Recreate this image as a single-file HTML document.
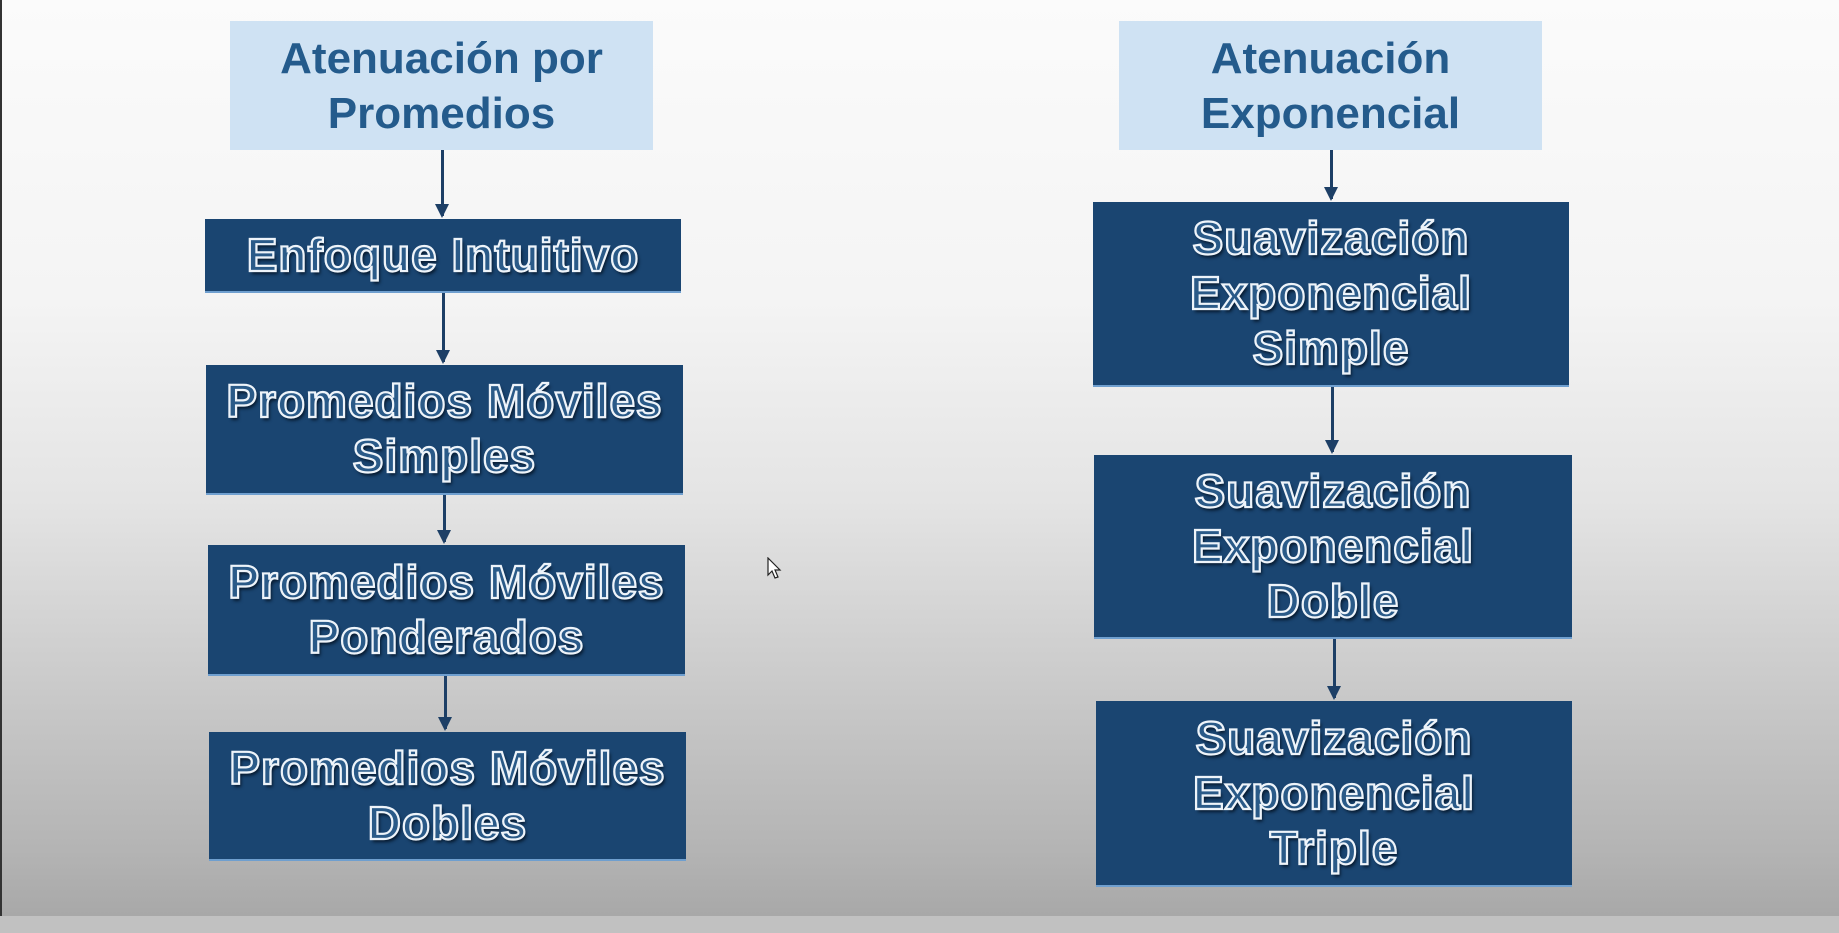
<!DOCTYPE html>
<html><head><meta charset="utf-8"><style>
html,body{margin:0;padding:0}
body{width:1839px;height:933px;position:relative;overflow:hidden;font-family:"Liberation Sans",sans-serif;
background:linear-gradient(to bottom,#fbfbfb 0px,#f4f4f4 300px,#e4e4e4 500px,#c8c8c8 700px,#b4b4b4 850px,#a8a8a8 916px);}
.bar{position:absolute;left:0;top:916px;width:1839px;height:17px;background:#c1c1c1}
.edge{position:absolute;left:0;top:0;width:2px;height:916px;background:#333}
.hdr{position:absolute;background:#cfe2f3;color:#245b8c;font-weight:bold;font-size:44px;line-height:55px;display:flex;align-items:center;justify-content:center;text-align:center}
.bx{position:absolute;background:#1a4571;border-bottom:2px solid #6f9fcf;display:flex;align-items:center;justify-content:center;text-align:center;
font-weight:bold;font-size:46px;line-height:55px;color:#2a5a88;-webkit-text-stroke:2.2px #eef4fa;text-shadow:2px 3px 3px #06182c;letter-spacing:1px;white-space:nowrap}
.ar{position:absolute;width:3px;background:#1d3f66}
.ar:after{content:"";position:absolute;bottom:-2px;left:-6px;border-left:7.5px solid transparent;border-right:7.5px solid transparent;border-top:14px solid #1d3f66}
</style></head><body>
<div class="edge"></div>
<div class="hdr" style="left:230px;top:21px;width:423px;height:129px">Atenuación por<br>Promedios</div>
<div class="ar" style="left:441px;top:150px;height:66px"></div>
<div class="bx" style="left:205px;top:219px;width:476px;height:72px">Enfoque Intuitivo</div>
<div class="ar" style="left:442px;top:293px;height:69px"></div>
<div class="bx" style="left:206px;top:365px;width:477px;height:128px">Promedios Móviles<br>Simples</div>
<div class="ar" style="left:443px;top:495px;height:47px"></div>
<div class="bx" style="left:208px;top:545px;width:477px;height:129px">Promedios Móviles<br>Ponderados</div>
<div class="ar" style="left:444px;top:676px;height:53px"></div>
<div class="bx" style="left:209px;top:732px;width:477px;height:127px">Promedios Móviles<br>Dobles</div>

<div class="hdr" style="left:1119px;top:21px;width:423px;height:129px">Atenuación<br>Exponencial</div>
<div class="ar" style="left:1330px;top:150px;height:49px"></div>
<div class="bx" style="left:1093px;top:202px;width:476px;height:183px">Suavización<br>Exponencial<br>Simple</div>
<div class="ar" style="left:1331px;top:387px;height:65px"></div>
<div class="bx" style="left:1094px;top:455px;width:478px;height:182px">Suavización<br>Exponencial<br>Doble</div>
<div class="ar" style="left:1333px;top:639px;height:59px"></div>
<div class="bx" style="left:1096px;top:701px;width:476px;height:184px">Suavización<br>Exponencial<br>Triple</div>

<svg style="position:absolute;left:767px;top:557px" width="16" height="24" viewBox="0 0 16 24"><path d="M1 1 L1 18 L5 14 L8 21 L11 20 L8 13 L13 13 Z" fill="#fff" stroke="#222" stroke-width="1.2"/></svg>
<div class="bar"></div>
</body></html>
